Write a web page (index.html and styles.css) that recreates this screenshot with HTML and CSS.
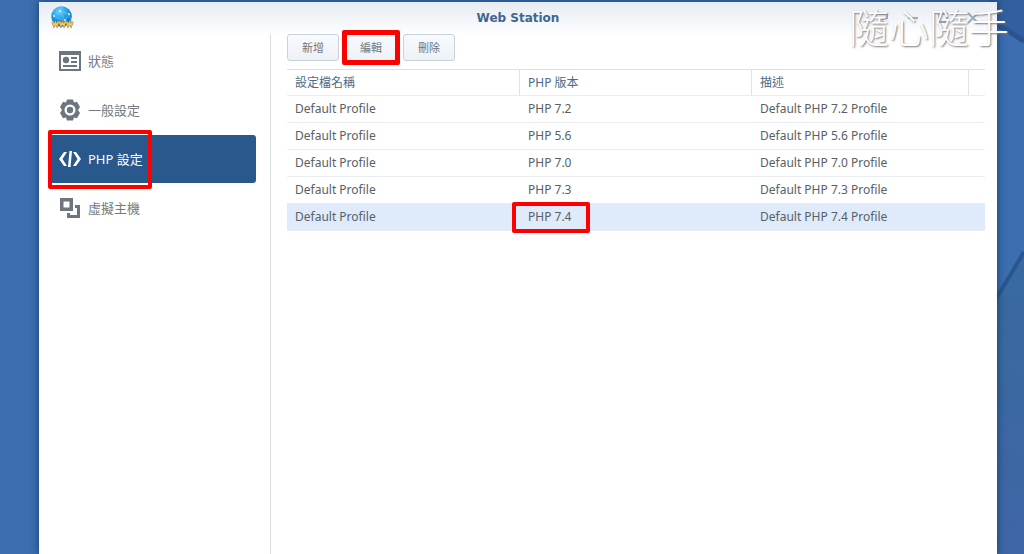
FILE: index.html
```html
<!DOCTYPE html>
<html lang="zh-Hant">
<head>
<meta charset="utf-8">
<title>Web Station</title>
<link rel="stylesheet" href="styles.css">
</head>
<body>
<svg class="wallpaper" viewBox="0 0 1024 554" preserveAspectRatio="none" aria-hidden="true">
  <defs>
    <linearGradient id="lower" x1="0" y1="0" x2="0" y2="1">
      <stop offset="0" stop-color="#386a9f"/><stop offset="1" stop-color="#3f66a5"/>
    </linearGradient>
  </defs>
  <path d="M990 0H1024V42L990 20Z" fill="#325f9f"/>
  <path d="M990 20 1024 41" stroke="#2a5390" stroke-width="5"/>
  <path d="M990 308 1024 256V554H990Z" fill="url(#lower)"/>
  <path d="M990 309 1024 252" stroke="#2b5590" stroke-width="4"/>
</svg>
<div class="window">
  <header class="titlebar">
    <svg class="logo" viewBox="0 0 24 24" aria-hidden="true">
      <defs>
        <radialGradient id="globe" cx=".4" cy=".25" r=".8">
          <stop offset="0" stop-color="#6fd2fa"/><stop offset=".5" stop-color="#209ce6"/><stop offset="1" stop-color="#0757b5"/>
        </radialGradient>
      </defs>
      <circle cx="11.500" cy="10.500" r="10.300" fill="url(#globe)"/>
      <path d="M3 10 10 5 19 8 15 15 10 5M3 10 15 15M19 8 21 14M10 5 12 1" fill="none" stroke="#7fd0f8" stroke-width=".5"/>
      <g fill="#d8f3ff"><circle cx="10" cy="5" r=".9"/><circle cx="19" cy="8" r=".9"/><circle cx="15" cy="14" r=".9"/><circle cx="4" cy="10" r=".9"/></g>
      <path d="M2.500 15.500 4 19.500 5.500 16.500 7 19.500 8.500 15.500M9.500 15.500 11 19.500 12.500 16.500 14 19.500 15.500 15.500M16.500 15.500 18 19.500 19.500 16.500 21 19.500 22.500 15.500" fill="none" stroke="#9b7a3c" stroke-width="2.400"/>
      <path d="M2.500 15.500 4 19.500 5.500 16.500 7 19.500 8.500 15.500M9.500 15.500 11 19.500 12.500 16.500 14 19.500 15.500 15.500M16.500 15.500 18 19.500 19.500 16.500 21 19.500 22.500 15.500" fill="none" stroke="#f3cb5e" stroke-width="1.400"/>
    </svg>
    <h1>Web Station</h1>
    <div class="controls">
      <button type="button" aria-label="Help"><svg viewBox="0 0 12 12"><path d="M2 2H10V6H6V8M6 9V11"/></svg></button>
      <button type="button" aria-label="Minimize"><svg viewBox="0 0 12 12"><path d="M1 6H11"/></svg></button>
      <button type="button" aria-label="Maximize"><svg viewBox="0 0 12 12"><path d="M2 2H10V10H2Z"/></svg></button>
      <button type="button" aria-label="Close"><svg viewBox="0 0 12 12"><path d="M1 1 11 11M11 1 1 11"/></svg></button>
    </div>
  </header>
  <div class="body">
    <nav class="sidebar">
      <a href="#status">
        <svg viewBox="0 0 22 22"><path fill-rule="evenodd" d="M0 1H22V21H0ZM2 5H20V19H2Z"/><circle cx="7" cy="10" r="3.200"/><path d="M12 7H18V9H12ZM12 11H18V13H12ZM4 15H18V17H4Z"/></svg>
        狀態</a>
      <a href="#general">
        <svg viewBox="0 0 22 22"><path fill-rule="evenodd" d="M8 0.500H14L15 3.500 18 2.800 21 8 19 11 21 14 18 19.200 15 18.500 14 21.500H8L7 18.500 4 19.200 1 14 3 11 1 8 4 2.800 7 3.500ZM11 5.500A5.500 5.500 0 1 0 11 16.500 5.500 5.500 0 1 0 11 5.500Z"/><circle cx="11" cy="11" r="3.200"/></svg>
        一般設定</a>
      <a href="#php" class="active" aria-current="page">
        <svg viewBox="0 0 22 22"><path d="M5 4H8L3.500 11 8 18H5L0 11ZM17 4H14L18.500 11 14 18H17L22 11ZM10.500 3H13L11.500 19H9Z"/></svg>
        PHP 設定</a>
      <a href="#vhost">
        <svg viewBox="0 0 22 22"><path fill-rule="evenodd" d="M1 1H14V14H1ZM4.500 4.500V10.500H10.500V4.500ZM16 8H21V21H8V16H11V18H18V11H16Z"/></svg>
        虛擬主機</a>
      <span class="mark mark-nav"></span>
    </nav>
    <main class="content">
      <div class="toolbar">
        <button type="button">新增</button>
        <button type="button" class="marked">編輯<span class="mark mark-edit"></span></button>
        <button type="button">刪除</button>
      </div>
      <table>
        <colgroup><col class="name"><col class="version"><col><col class="extra"></colgroup>
        <thead><tr><th scope="col">設定檔名稱</th><th scope="col">PHP 版本</th><th scope="col">描述</th><td></td></tr></thead>
        <tbody>
          <tr><td>Default Profile</td><td>PHP 7.2</td><td colspan="2">Default PHP 7.2 Profile</td></tr>
          <tr><td>Default Profile</td><td>PHP 5.6</td><td colspan="2">Default PHP 5.6 Profile</td></tr>
          <tr><td>Default Profile</td><td>PHP 7.0</td><td colspan="2">Default PHP 7.0 Profile</td></tr>
          <tr><td>Default Profile</td><td>PHP 7.3</td><td colspan="2">Default PHP 7.3 Profile</td></tr>
          <tr class="selected"><td>Default Profile</td><td class="marked">PHP 7.4<span class="mark mark-version"></span></td><td colspan="2">Default PHP 7.4 Profile</td></tr>
        </tbody>
      </table>
    </main>
  </div>
</div>
<div class="watermark">隨心隨手</div>
</body>
</html>
```
FILE: styles.css
```css
* { box-sizing: border-box; }

body {
  margin: 0;
  min-height: 100vh;
  display: flex;
  padding: 2px 27px 0 39px;
  background: #3c6eb0;
  color: #596067;
  font: 12px/26px "Noto Sans", "Noto Sans CJK TC", sans-serif;
}

.wallpaper {
  position: absolute;
  inset: 0;
  width: 100%;
  height: 100%;
}

.window {
  position: relative;
  flex: 1;
  display: flex;
  flex-direction: column;
  background: #fff;
  box-shadow: 0 0 7px 1px #153c6ecc;
}

.titlebar {
  height: 32px;
  display: grid;
  grid-template-columns: 1fr auto 1fr;
  align-items: center;
  padding: 0 11px;
  background: linear-gradient(#e6ecf2, #fdfeff);
}

.titlebar h1 {
  margin: 0;
  color: #40658f;
  font: bold 12px/32px "DejaVu Sans", sans-serif;
}

.logo { width: 24px; height: 24px; }

.controls {
  display: flex;
  justify-content: flex-end;
  gap: 18px;
  padding-right: 7px;
}

.controls button {
  width: 12px;
  height: 24px;
  padding: 0;
  border: 0;
  background: none;
}

.controls svg {
  display: block;
  width: 12px;
  height: 12px;
  fill: none;
  stroke: #9dabb9;
  stroke-width: 2;
}

.body { flex: 1; display: flex; }

.sidebar {
  position: relative;
  width: 232px;
  padding: 3px 14px 0 10px;
  border-right: 1px solid #d8dce0;
  display: flex;
  flex-direction: column;
  gap: 1px;
}

.sidebar a {
  height: 48px;
  display: flex;
  align-items: center;
  gap: 7px;
  padding-left: 10px;
  border-radius: 3px;
  color: #747a80;
  font-size: 13px;
  text-decoration: none;
}

.sidebar svg { width: 22px; height: 22px; fill: #6d757e; }
.sidebar .active { background: #29588c; color: #fff; }
.sidebar .active svg { fill: #fff; }

.content { flex: 1; padding: 0 12px 0 16px; }

.toolbar { display: flex; gap: 6px; margin-bottom: 8px; }

.toolbar button {
  width: 52px;
  height: 27px;
  padding: 0;
  border: 1px solid #c8d1dc;
  border-radius: 3px;
  background: linear-gradient(#f8fafd, #edf2f8);
  color: #70767d;
  font: 11px/24px "Noto Sans", "Noto Sans CJK TC", sans-serif;
}

table {
  width: 100%;
  table-layout: fixed;
  border-collapse: separate;
  border-spacing: 0;
}

.name { width: 233px; }
.version { width: 232px; }
.extra { width: 16px; }

th, td {
  height: 27px;
  padding: 0 8px;
  border-bottom: 1px solid #e9edf1;
  text-align: left;
  font-weight: normal;
}

thead th, thead td { border-top: 1px solid #dbe2e6; color: #4c6a86; line-height: 25px; }
thead td { padding: 0; }
thead th { border-right: 1px solid #dde3e8; }
.selected td { background: #dfebfb; }

.marked { position: relative; }

.mark {
  position: absolute;
  border: 4px solid #fe0000;
  border-radius: 2px;
  pointer-events: none;
}

.mark-nav { left: 9px; top: 96px; width: 104px; height: 59px; }
.mark-edit { inset: -5px -4px; border-width: 5px; }
.mark-version { left: -8px; top: -2px; width: 78px; height: 31px; }

.watermark {
  position: absolute;
  top: 0;
  right: 15px;
  color: #fff;
  font: 200 40px/52px "Noto Sans CJK TC", sans-serif;
  text-shadow: 1px 1px 2px #777;
  pointer-events: none;
}
```
